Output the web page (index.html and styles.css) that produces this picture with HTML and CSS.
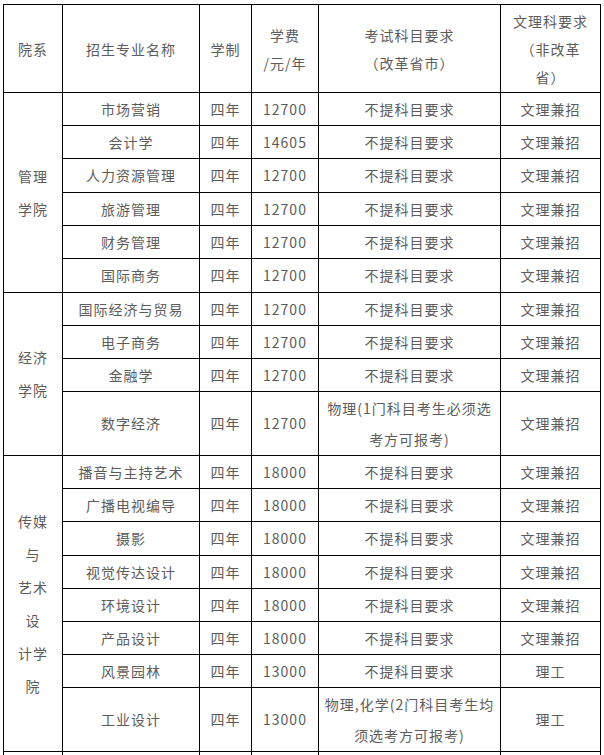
FILE: index.html
```html
<!DOCTYPE html>
<html lang="zh-CN">
<head>
<meta charset="utf-8">
<title>招生专业</title>
<link rel="stylesheet" href="styles.css">
</head>
<body>
<div class="plan">
  <div class="cell head">院系</div>
  <div class="cell head">招生专业名称</div>
  <div class="cell head">学制</div>
  <div class="cell head">学费<br>/元/年</div>
  <div class="cell head">考试科目要求<br>（改革省市）</div>
  <div class="cell head">文理科要求<br>（非改革<br>省）</div>

  <div class="cell dept span6">管理<br>学院</div>
  <div class="cell">市场营销</div><div class="cell">四年</div><div class="cell">12700</div><div class="cell">不提科目要求</div><div class="cell">文理兼招</div>
  <div class="cell">会计学</div><div class="cell">四年</div><div class="cell">14605</div><div class="cell">不提科目要求</div><div class="cell">文理兼招</div>
  <div class="cell">人力资源管理</div><div class="cell">四年</div><div class="cell">12700</div><div class="cell">不提科目要求</div><div class="cell">文理兼招</div>
  <div class="cell">旅游管理</div><div class="cell">四年</div><div class="cell">12700</div><div class="cell">不提科目要求</div><div class="cell">文理兼招</div>
  <div class="cell">财务管理</div><div class="cell">四年</div><div class="cell">12700</div><div class="cell">不提科目要求</div><div class="cell">文理兼招</div>
  <div class="cell">国际商务</div><div class="cell">四年</div><div class="cell">12700</div><div class="cell">不提科目要求</div><div class="cell">文理兼招</div>

  <div class="cell dept span4">经济<br>学院</div>
  <div class="cell">国际经济与贸易</div><div class="cell">四年</div><div class="cell">12700</div><div class="cell">不提科目要求</div><div class="cell">文理兼招</div>
  <div class="cell">电子商务</div><div class="cell">四年</div><div class="cell">12700</div><div class="cell">不提科目要求</div><div class="cell">文理兼招</div>
  <div class="cell">金融学</div><div class="cell">四年</div><div class="cell">12700</div><div class="cell">不提科目要求</div><div class="cell">文理兼招</div>
  <div class="cell">数字经济</div><div class="cell">四年</div><div class="cell">12700</div><div class="cell two">物理(1门科目考生必须选<br>考方可报考)</div><div class="cell">文理兼招</div>

  <div class="cell dept span8">传媒<br>与<br>艺术<br>设<br>计学<br>院</div>
  <div class="cell">播音与主持艺术</div><div class="cell">四年</div><div class="cell">18000</div><div class="cell">不提科目要求</div><div class="cell">文理兼招</div>
  <div class="cell">广播电视编导</div><div class="cell">四年</div><div class="cell">18000</div><div class="cell">不提科目要求</div><div class="cell">文理兼招</div>
  <div class="cell">摄影</div><div class="cell">四年</div><div class="cell">18000</div><div class="cell">不提科目要求</div><div class="cell">文理兼招</div>
  <div class="cell">视觉传达设计</div><div class="cell">四年</div><div class="cell">18000</div><div class="cell">不提科目要求</div><div class="cell">文理兼招</div>
  <div class="cell">环境设计</div><div class="cell">四年</div><div class="cell">18000</div><div class="cell">不提科目要求</div><div class="cell">文理兼招</div>
  <div class="cell">产品设计</div><div class="cell">四年</div><div class="cell">18000</div><div class="cell">不提科目要求</div><div class="cell">文理兼招</div>
  <div class="cell">风景园林</div><div class="cell">四年</div><div class="cell">13000</div><div class="cell">不提科目要求</div><div class="cell">理工</div>
  <div class="cell">工业设计</div><div class="cell">四年</div><div class="cell">13000</div><div class="cell two">物理,化学(2门科目考生均<br>须选考方可报考)</div><div class="cell">理工</div>

  <div class="cell"></div><div class="cell"></div><div class="cell"></div><div class="cell"></div><div class="cell"></div><div class="cell"></div>
</div>
</body>
</html>
```

FILE: styles.css
```css
html, body {
  margin: 0;
  padding: 0;
  background: #ffffff;
}

body {
  font-family: "Noto Sans CJK SC", "Microsoft YaHei", sans-serif;
  color: #5c5c5c;
}

.plan {
  margin: 4px 0 0 3px;
  width: 598px;
  box-sizing: border-box;
  padding: 1px 1px 0 1px;
  background: #000;
  display: grid;
  gap: 1px;
  grid-template-columns: 58px 136px 51px 66px 181px 99px;
  grid-template-rows:
    87px
    32px 32px 33px 32px 32px 33px
    32px 32px 32px 63px
    32px 32px 33px 32px 32px 32px 32px 63px
    3px;
  font-size: 14px;
  letter-spacing: 1px;
}

.cell {
  background: #ffffff;
  display: flex;
  align-items: center;
  justify-content: center;
  text-align: center;
  white-space: nowrap;
  line-height: 31px;
  min-height: 0;
  overflow: hidden;
}

.head {
  line-height: 28px;
}

.two {
  line-height: 31px;
}

.dept {
  grid-column: 1;
  line-height: 33px;
}

.span6 { grid-row: span 6; }
.span4 { grid-row: span 4; }
.span8 { grid-row: span 8; }
```
